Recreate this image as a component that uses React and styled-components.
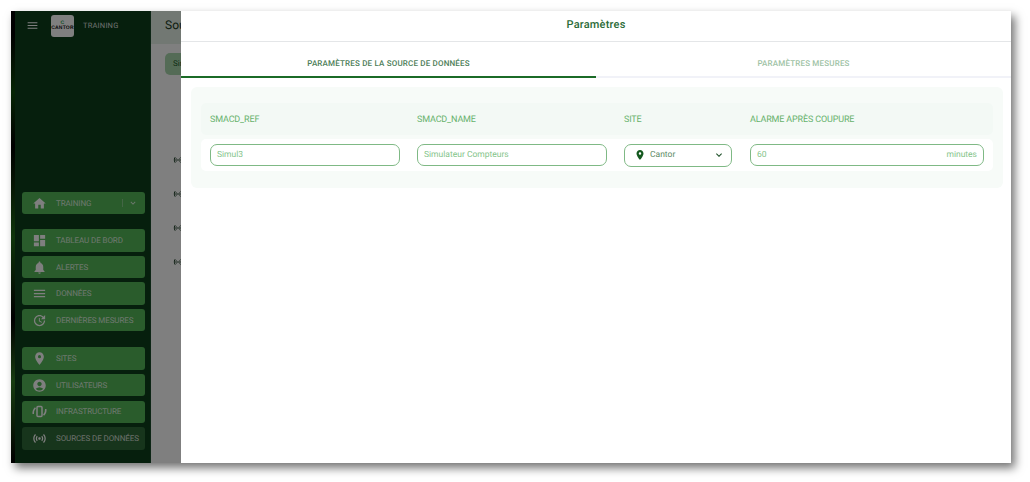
import React from 'react';
import styled, { createGlobalStyle } from 'styled-components';
import {
  MdMenu, MdHome, MdDashboard, MdNotifications, MdUpdate, MdPlace,
  MdAccountCircle, MdSensors, MdKeyboardArrowDown,
} from 'react-icons/md';

const Global = createGlobalStyle`
  html, body {
    margin: 0;
    height: 100%;
    background: #fff;
  }
  body {
    padding: 11px 19px 19px 11px;
    box-sizing: border-box;
    font-family: Roboto, "Liberation Sans", sans-serif;
    text-rendering: geometricPrecision;
    overflow: hidden;
  }
  #root {
    height: 100%;
  }
`;

const Window = styled.div`
  position: relative;
  display: flex;
  height: 452px;
  width: 1000px;
  overflow: hidden;
  background: #fff;
  box-shadow: 4px 5px 9px rgba(0, 0, 0, 0.55);
`;

const Strip = styled.div`
  width: 4px;
  flex: none;
  background: linear-gradient(180deg, #000 5%, #0c4a0a 18%, #000 30%, #1d6a16 50%, #000 68%, #2f7a22 82%, #000 100%);
`;

const Sidebar = styled.aside`
  width: 136px;
  flex: none;
  display: flex;
  flex-direction: column;
  background: #0c3f1b;
  border-right: 1px solid #1b4a2a;
  box-sizing: border-box;
  padding: 0 5px 13.5px 7px;
`;

const Brand = styled.div`
  display: flex;
  align-items: center;
  height: 22px;
  margin: 4px 0 auto;
  color: rgba(255, 255, 255, 0.85);
`;

const Burger = styled(MdMenu)`
  font-size: 13px;
  color: #fff;
  margin: 0 12px 2px 4px;
  flex: none;
`;

const Logo = styled.div`
  width: 23px;
  height: 22px;
  flex: none;
  border-radius: 3px;
  background: #fff;
  color: #111;
  display: flex;
  flex-direction: column;
  align-items: center;
  justify-content: center;
  font-family: "Liberation Sans", sans-serif;
  font-size: 5px;
  font-weight: 700;
  line-height: 5px;
  letter-spacing: 0.2px;
  white-space: nowrap;
  overflow: hidden;
  margin-right: 9px;
`;

const LogoMark = styled.span`
  color: #1c9c4a;
`;

const BrandName = styled.span`
  font-size: 7.5px;
  font-weight: 400;
  letter-spacing: 0.2px;
  margin-bottom: 2px;
`;

const NavGroup = styled.div`
  display: flex;
  flex-direction: column;
  gap: 4.2px;
  margin-bottom: ${(p) => p.$gap}px;
`;

const NavItem = styled.div`
  display: flex;
  align-items: center;
  height: 22.4px;
  border-radius: 3px;
  background: ${(p) => (p.$active ? '#2f6a38' : '#54b859')};
  color: rgba(255, 255, 255, 0.8);
  font-size: 8px;
  font-weight: 400;
  letter-spacing: -0.1px;
  white-space: nowrap;
`;

const NavIcon = styled.span`
  width: 34px;
  flex: none;
  display: flex;
  justify-content: center;
  font-size: 15px;
  color: #fff;
`;

const SiteEnd = styled.span`
  margin-left: auto;
  display: flex;
  align-items: center;
  font-size: 10px;
  padding-right: 7px;
  gap: 5px;
`;

const SiteBar = styled.span`
  width: 1px;
  height: 8px;
  background: rgba(255, 255, 255, 0.3);
`;

const Main = styled.main`
  flex: 1;
  min-width: 0;
`;

const MainHead = styled.div`
  height: 33px;
  display: flex;
  align-items: center;
  padding-left: 14px;
  padding-bottom: 5px;
  box-sizing: border-box;
  background: #e4f0e6;
  color: #1d3d25;
  font-size: 12px;
`;

const MainTab = styled.div`
  margin: 9px 0 0 14px;
  width: 40px;
  height: 22px;
  border-radius: 5px;
  background: #a9d7ad;
  color: #1d5c2d;
  font-size: 8px;
  line-height: 22px;
  padding-left: 8px;
  box-sizing: border-box;
`;

const SourceList = styled.div`
  margin: 80px 0 0 22px;
  display: flex;
  flex-direction: column;
  gap: 24px;
  color: #10331a;
  font-size: 10px;
`;

const Overlay = styled.div`
  position: absolute;
  inset: 0;
  background: rgba(0, 0, 0, 0.5);
`;

const Modal = styled.section`
  position: absolute;
  top: 0;
  bottom: 0;
  right: 0;
  width: 830px;
  background: #fff;
  display: flex;
  flex-direction: column;
`;

const ModalTitle = styled.header`
  height: 31px;
  flex: none;
  display: flex;
  align-items: center;
  justify-content: center;
  box-sizing: border-box;
  padding-bottom: 4px;
  border-bottom: 1px solid #e4e6e8;
  color: #2b6b37;
  font-size: 11px;
  font-weight: 500;
  letter-spacing: 0.2px;
`;

const Tabs = styled.nav`
  display: grid;
  grid-template-columns: 415px 415px;
  height: 36px;
  flex: none;
`;

const Tab = styled.div`
  display: flex;
  align-items: center;
  justify-content: center;
  box-sizing: border-box;
  padding-top: 9px;
  font-size: 8px;
  font-weight: 500;
  letter-spacing: 0.18px;
  color: ${(p) => (p.$active ? '#4c7d57' : '#9ec2a5')};
  border-bottom: 2px solid ${(p) => (p.$active ? '#1b6b27' : '#f1f2f8')};
`;

const Panel = styled.div`
  margin: 9px 8px 0 10px;
  padding: 16px 10px 17px 10px;
  border-radius: 6px;
  background: #f7fbf8;
`;

const FormHead = styled.div`
  display: grid;
  grid-template-columns: 207px 207px 126px 1fr;
  height: 32px;
  align-items: center;
  padding: 0 9px;
  border-radius: 5px;
  background: #f3f9f5;
`;

const HeadCell = styled.div`
  color: #66b26c;
  font-size: 9px;
  font-weight: 400;
  letter-spacing: -0.15px;
  padding-top: 1px;
`;

const FormRow = styled.div`
  display: grid;
  grid-template-columns: 207px 207px 126px 1fr;
  height: 32px;
  margin-top: 4px;
  align-items: center;
  padding: 0 9px;
  border-radius: 5px;
  background: #fff;
`;

const Field = styled.div`
  display: flex;
  align-items: center;
  justify-content: space-between;
  box-sizing: border-box;
  width: ${(p) => p.$width};
  height: 22px;
  padding: 0 6px;
  border: 1px solid #7fb985;
  border-radius: 7px;
  color: #84c48a;
  font-size: 8.5px;
`;

const SiteSelect = styled(Field)`
  height: 23px;
  padding: 0 6px 0 9px;
  color: #5e8a66;
`;

const SiteName = styled.span`
  display: flex;
  align-items: center;
  gap: 4px;
  svg {
    font-size: 12px;
    color: #14591f;
  }
`;

const Chevron = styled(MdKeyboardArrowDown)`
  font-size: 12px;
  color: #1d4f28;
`;

// phone between two arcs, no icon in the packages has these strokes
const InfraIcon = () => (
  <svg width="1em" height="1em" viewBox="0 0 24 24" fill="none" stroke="currentColor">
    <rect x="8" y="4" width="8" height="16" rx="1.5" strokeWidth="2.4" />
    <path d="M5.5 6 C2.5 9 1.5 12 2 16" strokeWidth="2.4" />
    <path d="M18.5 18 C21.5 15 22.5 12 22 8" strokeWidth="2.4" />
  </svg>
);

const upperNav = [
  [<MdDashboard />, 'TABLEAU DE BORD'],
  [<MdNotifications />, 'ALERTES'],
  [<MdMenu />, 'DONNÉES'],
  [<MdUpdate />, 'DERNIÈRES MESURES'],
];

const lowerNav = [
  [<MdPlace />, 'SITES'],
  [<MdAccountCircle />, 'UTILISATEURS'],
  [<InfraIcon />, 'INFRASTRUCTURE'],
  [<MdSensors />, 'SOURCES DE DONNÉES', true],
];

const App = () => (
  <Window>
    <Global />
    <Strip />
    <Sidebar>
      <Brand>
        <Burger />
        <Logo>
          <LogoMark>C</LogoMark>
          CANTOR
        </Logo>
        <BrandName>TRAINING</BrandName>
      </Brand>
      <NavGroup $gap={15}>
        <NavItem>
          <NavIcon><MdHome /></NavIcon>
          TRAINING
          <SiteEnd><SiteBar /><MdKeyboardArrowDown /></SiteEnd>
        </NavItem>
      </NavGroup>
      <NavGroup $gap={16}>
        {upperNav.map(([icon, label]) => (
          <NavItem key={label}><NavIcon>{icon}</NavIcon>{label}</NavItem>
        ))}
      </NavGroup>
      <NavGroup $gap={0}>
        {lowerNav.map(([icon, label, active]) => (
          <NavItem key={label} $active={active}><NavIcon>{icon}</NavIcon>{label}</NavItem>
        ))}
      </NavGroup>
    </Sidebar>
    <Main>
      <MainHead>Sources de données</MainHead>
      <MainTab>Simul</MainTab>
      <SourceList>
        <MdSensors />
        <MdSensors />
        <MdSensors />
        <MdSensors />
      </SourceList>
    </Main>
    <Overlay />
    <Modal>
      <ModalTitle>Paramètres</ModalTitle>
      <Tabs>
        <Tab $active>PARAMÈTRES DE LA SOURCE DE DONNÉES</Tab>
        <Tab>PARAMÈTRES MESURES</Tab>
      </Tabs>
      <Panel>
        <FormHead>
          <HeadCell>SMACD_REF</HeadCell>
          <HeadCell>SMACD_NAME</HeadCell>
          <HeadCell>SITE</HeadCell>
          <HeadCell>ALARME APRÈS COUPURE</HeadCell>
        </FormHead>
        <FormRow>
          <Field $width="190px">Simul3</Field>
          <Field $width="190px">Simulateur Compteurs</Field>
          <SiteSelect $width="108px">
            <SiteName><MdPlace />Cantor</SiteName>
            <Chevron />
          </SiteSelect>
          <Field $width="234px">60<span>minutes</span></Field>
        </FormRow>
      </Panel>
    </Modal>
  </Window>
);

export default App;
